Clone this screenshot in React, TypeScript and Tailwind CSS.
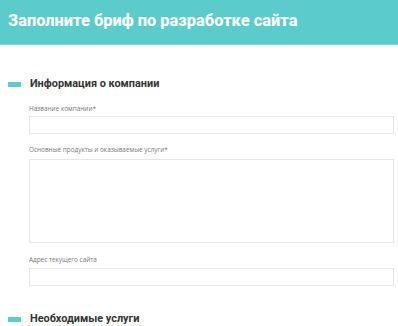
import React from "react";

function SectionTitle({ children }: { children: React.ReactNode }) {
  return (
    <div className="flex items-center h-[12px]">
      <div className="w-[13px] h-[5px] bg-[#5ccccc] ml-[8px]" />
      <h2 className="ml-[9px] text-[10.9px] font-bold text-[#333333] leading-none" style={{ fontFamily: "Roboto, sans-serif" }}>
        {children}
      </h2>
    </div>
  );
}

function Label({ children }: { children: React.ReactNode }) {
  return (
    <div className="text-[6.4px] h-[8px] text-[#777777] leading-[8px]" style={{ fontFamily: "'Open Sans', sans-serif" }}>
      {children}
    </div>
  );
}

export default function App() {
  return (
    <div className="w-[398px] h-[326px] bg-white overflow-hidden">
      <div className="h-[45px] bg-[#5ccbcb] border-b border-[#7ad6d6] flex items-center px-[8px]">
        <h1 className="text-white text-[16.4px] font-extrabold leading-none mt-[-1px]" style={{ fontFamily: "Roboto, sans-serif" }}>
          Заполните бриф по разработке сайта
        </h1>
      </div>
      <div className="pt-[33px]">
        <SectionTitle>Информация о компании</SectionTitle>
        <div className="pl-[29px] pr-[4px] pt-[15px]">
          <Label>Название компании*</Label>
          <div className="mt-[3px] h-[18px] border border-[#e6e6e6]" />
          <div className="mt-[12px]">
            <Label>Основные продукты и оказываемые услуги*</Label>
          </div>
          <div className="mt-[5px] h-[84px] border border-[#e6e6e6]" />
          <div className="mt-[13px]">
            <Label>Адрес текущего сайта</Label>
          </div>
          <div className="mt-[4px] h-[18px] border border-[#e6e6e6]" />
        </div>
        <div className="mt-[27px]">
          <SectionTitle>Необходимые услуги</SectionTitle>
        </div>
      </div>
    </div>
  );
}
